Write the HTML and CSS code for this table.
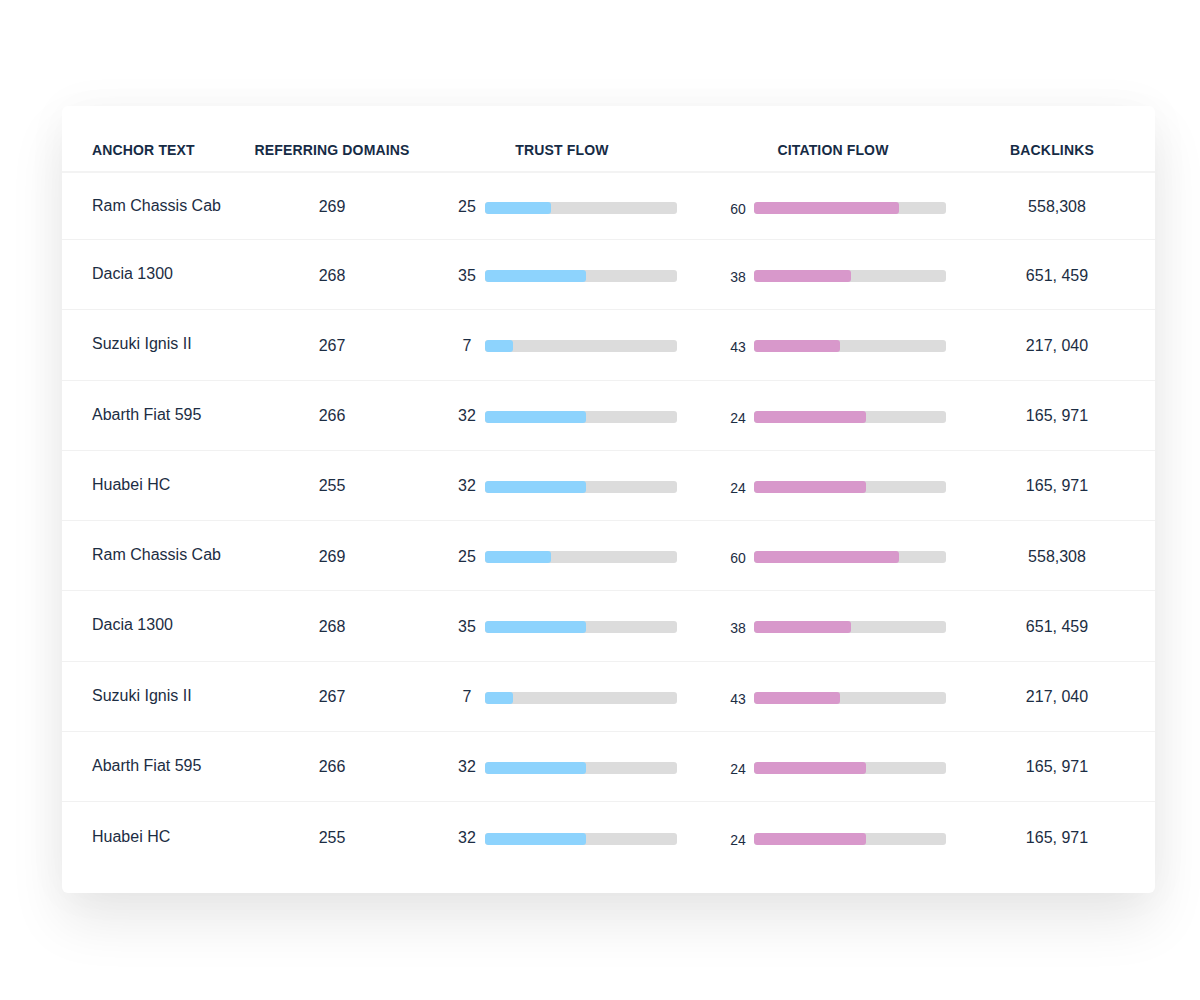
FILE: index.html
```html
<!DOCTYPE html>
<html lang="en">
<head>
<meta charset="utf-8">
<title>Anchor text table</title>
<link rel="stylesheet" href="styles.css">
</head>
<body>
<div class="page">
  <div class="card">
    <div class="row head">
      <div class="c1">ANCHOR TEXT</div>
      <div class="c2">REFERRING DOMAINS</div>
      <div class="c3 hc">TRUST FLOW</div>
      <div class="c4 hc">CITATION FLOW</div>
      <div class="c5 hc">BACKLINKS</div>
    </div>

    <div class="row first">
      <div class="c1 name">Ram Chassis Cab</div>
      <div class="c2 num">269</div>
      <div class="c3 metric"><span class="tv">25</span><span class="bar"><span class="fill trust" style="width:66px"></span></span></div>
      <div class="c4 metric"><span class="cv">60</span><span class="bar"><span class="fill cite" style="width:145px"></span></span></div>
      <div class="c5 num bl">558,308</div>
    </div>
    <div class="row">
      <div class="c1 name">Dacia 1300</div>
      <div class="c2 num">268</div>
      <div class="c3 metric"><span class="tv">35</span><span class="bar"><span class="fill trust" style="width:101px"></span></span></div>
      <div class="c4 metric"><span class="cv">38</span><span class="bar"><span class="fill cite" style="width:97px"></span></span></div>
      <div class="c5 num bl">651, 459</div>
    </div>
    <div class="row">
      <div class="c1 name">Suzuki Ignis II</div>
      <div class="c2 num">267</div>
      <div class="c3 metric"><span class="tv">7</span><span class="bar"><span class="fill trust" style="width:28px"></span></span></div>
      <div class="c4 metric"><span class="cv">43</span><span class="bar"><span class="fill cite" style="width:86px"></span></span></div>
      <div class="c5 num bl">217, 040</div>
    </div>
    <div class="row">
      <div class="c1 name">Abarth Fiat 595</div>
      <div class="c2 num">266</div>
      <div class="c3 metric"><span class="tv">32</span><span class="bar"><span class="fill trust" style="width:101px"></span></span></div>
      <div class="c4 metric"><span class="cv">24</span><span class="bar"><span class="fill cite" style="width:112px"></span></span></div>
      <div class="c5 num bl">165, 971</div>
    </div>
    <div class="row">
      <div class="c1 name">Huabei HC</div>
      <div class="c2 num">255</div>
      <div class="c3 metric"><span class="tv">32</span><span class="bar"><span class="fill trust" style="width:101px"></span></span></div>
      <div class="c4 metric"><span class="cv">24</span><span class="bar"><span class="fill cite" style="width:112px"></span></span></div>
      <div class="c5 num bl">165, 971</div>
    </div>
    <div class="row">
      <div class="c1 name">Ram Chassis Cab</div>
      <div class="c2 num">269</div>
      <div class="c3 metric"><span class="tv">25</span><span class="bar"><span class="fill trust" style="width:66px"></span></span></div>
      <div class="c4 metric"><span class="cv">60</span><span class="bar"><span class="fill cite" style="width:145px"></span></span></div>
      <div class="c5 num bl">558,308</div>
    </div>
    <div class="row">
      <div class="c1 name">Dacia 1300</div>
      <div class="c2 num">268</div>
      <div class="c3 metric"><span class="tv">35</span><span class="bar"><span class="fill trust" style="width:101px"></span></span></div>
      <div class="c4 metric"><span class="cv">38</span><span class="bar"><span class="fill cite" style="width:97px"></span></span></div>
      <div class="c5 num bl">651, 459</div>
    </div>
    <div class="row">
      <div class="c1 name">Suzuki Ignis II</div>
      <div class="c2 num">267</div>
      <div class="c3 metric"><span class="tv">7</span><span class="bar"><span class="fill trust" style="width:28px"></span></span></div>
      <div class="c4 metric"><span class="cv">43</span><span class="bar"><span class="fill cite" style="width:86px"></span></span></div>
      <div class="c5 num bl">217, 040</div>
    </div>
    <div class="row">
      <div class="c1 name">Abarth Fiat 595</div>
      <div class="c2 num">266</div>
      <div class="c3 metric"><span class="tv">32</span><span class="bar"><span class="fill trust" style="width:101px"></span></span></div>
      <div class="c4 metric"><span class="cv">24</span><span class="bar"><span class="fill cite" style="width:112px"></span></span></div>
      <div class="c5 num bl">165, 971</div>
    </div>
    <div class="row last">
      <div class="c1 name">Huabei HC</div>
      <div class="c2 num">255</div>
      <div class="c3 metric"><span class="tv">32</span><span class="bar"><span class="fill trust" style="width:101px"></span></span></div>
      <div class="c4 metric"><span class="cv">24</span><span class="bar"><span class="fill cite" style="width:112px"></span></span></div>
      <div class="c5 num bl">165, 971</div>
    </div>
  </div>
</div>
</body>
</html>
```

FILE: styles.css
```css
* { box-sizing: border-box; }
html, body {
  margin: 0;
  padding: 0;
  background: #ffffff;
}
body {
  font-family: "Liberation Sans", Arial, sans-serif;
  color: #1c2d43;
}
.page {
  padding: 106px 0 0 62px;
  width: 1200px;
  height: 1000px;
}
.card {
  width: 1093px;
  background: #ffffff;
  border-radius: 6px;
  padding: 0 7px 21px 30px;
  box-shadow: 0 28px 55px rgba(0, 0, 0, 0.09), 0 0 45px rgba(0, 0, 0, 0.035);
}
.row {
  display: grid;
  grid-template-columns: 158px 164px 296px 246px 192px;
  align-items: center;
  height: 70.25px;
  margin-left: -30px;
  margin-right: -7px;
  padding-left: 30px;
  padding-right: 7px;
  border-bottom: 1px solid #f1f1f1;
}
.row.head {
  height: 67px;
  align-items: end;
  padding-bottom: 13px;
  font-size: 14px;
  letter-spacing: 0.15px;
  font-weight: 700;
  color: #162b45;
  border-bottom: 2px solid #f3f3f3;
}
.row.first { height: 67px; }
.row.last { border-bottom: none; height: 70px; }
.c2, .hc { text-align: center; }
.name {
  font-size: 16px;
  margin-top: -1px;
}
.num {
  font-size: 16px;
  text-align: center;
  margin-top: 2px;
}
.bl { padding-left: 10px; }
.metric {
  display: flex;
  align-items: center;
}
.c3.metric { padding-left: 35px; }
.c4.metric { padding-left: 12px; }
.tv {
  width: 36px;
  text-align: center;
  font-size: 16px;
  margin-top: 2px;
}
.cv {
  width: 32px;
  text-align: center;
  font-size: 14px;
  margin-top: 5px;
}
.bar {
  position: relative;
  display: block;
  width: 192px;
  height: 12px;
  border-radius: 3px;
  background: #dcdcdc;
  overflow: hidden;
  margin-top: 3px;
}
.fill {
  display: block;
  height: 100%;
  border-radius: 3px;
}
.fill.trust { background: #8dd3fd; }
.fill.cite { background: #d898cb; }
```
